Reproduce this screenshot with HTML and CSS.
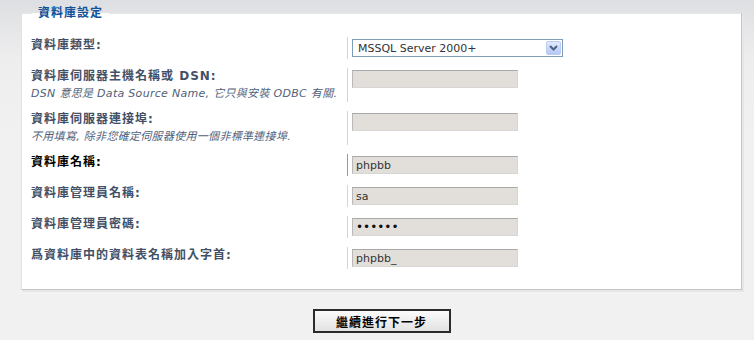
FILE: index.html
```html
<!DOCTYPE html>
<html lang="zh-Hant">
<head>
    <meta charset="UTF-8">
    <meta name="viewport" content="width=device-width, initial-scale=1.0">
    <title>資料庫設定</title>
    <link rel="stylesheet" href="styles.css">
</head>
<body>
    <form class="install-form" action="#" onsubmit="return false;">
        <fieldset class="settings">
            <legend>資料庫設定</legend>

            <dl class="row">
                <dt><label for="dbms">資料庫類型:</label></dt>
                <dd>
                    <div class="select" id="dbms">
                        <span class="select-value">MSSQL Server 2000+</span>
                        <span class="select-arrow">
                            <svg width="9" height="6" viewBox="0 0 9 6"><path d="M1 1 L4.5 4.5 L8 1" fill="none" stroke="#4d6185" stroke-width="2"/></svg>
                        </span>
                    </div>
                </dd>
            </dl>

            <dl class="row">
                <dt>
                    <label for="dbhost">資料庫伺服器主機名稱或 DSN:</label>
                    <span class="explain">DSN 意思是 Data Source Name, 它只與安裝 ODBC 有關.</span>
                </dt>
                <dd><input class="text" type="text" id="dbhost" value=""></dd>
            </dl>

            <dl class="row">
                <dt>
                    <label for="dbport">資料庫伺服器連接埠:</label>
                    <span class="explain">不用填寫, 除非您確定伺服器使用一個非標準連接埠.</span>
                </dt>
                <dd><input class="text" type="text" id="dbport" value=""></dd>
            </dl>

            <dl class="row active">
                <dt><label for="dbname">資料庫名稱:</label></dt>
                <dd><input class="text" type="text" id="dbname" value="phpbb"></dd>
            </dl>

            <dl class="row">
                <dt><label for="dbuser">資料庫管理員名稱:</label></dt>
                <dd><input class="text" type="text" id="dbuser" value="sa"></dd>
            </dl>

            <dl class="row">
                <dt><label for="dbpasswd">資料庫管理員密碼:</label></dt>
                <dd><input class="text" type="password" id="dbpasswd" value="secret"></dd>
            </dl>

            <dl class="row">
                <dt><label for="table_prefix">爲資料庫中的資料表名稱加入字首:</label></dt>
                <dd><input class="text" type="text" id="table_prefix" value="phpbb_"></dd>
            </dl>
        </fieldset>

        <div class="submit-row">
            <button class="btn" type="submit">繼續進行下一步</button>
        </div>
    </form>
</body>
</html>
```

FILE: styles.css
```css
html {
    height: 100%;
}

body {
    margin: 0;
    min-height: 100%;
    font-family: 'DejaVu Sans', 'Noto Sans CJK TC', sans-serif;
    background: linear-gradient(#dedfe2 0, #eeeeef 60px, #f1f1f1 140px);
    background-color: #f1f1f1;
}

.install-form {
    padding: 0 12px 0 21px;
}

.settings {
    margin: 5px 0 0 0;
    padding: 16px 9px 20px 9px;
    background-color: #fff;
    border: 1px solid;
    border-color: #e6e6e6 #c4c4c4 #c4c4c4 #e2e2e2;
    box-shadow: 2px 2px 0 #e6e6e6;
}

.settings legend {
    margin-left: 1px;
    padding: 0 6px;
    font-size: 12px;
    line-height: 16px;
    font-weight: bold;
    color: #115098;
    letter-spacing: 1px;
}

.row {
    display: flex;
    margin: 0 0 9px 0;
}

.row:last-child {
    margin-bottom: 0;
}

.row dt {
    width: 316px;
    margin: 0;
    flex-shrink: 0;
}

.row dd {
    margin: 0;
    padding: 2px 0 2px 4px;
    border-left: 1px solid #d4d4d4;
}

.row label {
    display: block;
    font-size: 12px;
    line-height: 17px;
    font-weight: bold;
    letter-spacing: 1px;
    color: #425067;
}

.row.active label {
    color: #000;
}

.row.active dd {
    border-left-color: #999;
}

.explain {
    display: block;
    font-size: 11px;
    line-height: 17px;
    font-style: italic;
    letter-spacing: 0.3px;
    color: #4f5f7b;
}

.text {
    box-sizing: border-box;
    display: block;
    width: 166px;
    height: 18px;
    margin: 0;
    padding: 0 3px;
    border: 1px solid;
    border-color: #a9a9a9 #d6d6d6 #d6d6d6 #b9b9b9;
    background-color: #e2dfda;
    font-family: 'DejaVu Sans', sans-serif;
    font-size: 11px;
    color: #333;
    outline: none;
}

input[type="password"].text {
    font-size: 12px;
    color: #111;
}

.select {
    box-sizing: border-box;
    display: flex;
    align-items: center;
    justify-content: space-between;
    width: 211px;
    height: 18px;
    padding: 0 1px 0 5px;
    border: 1px solid #7f9db9;
    background-color: #fff;
    font-size: 11px;
    color: #333;
}

.select-arrow {
    box-sizing: border-box;
    display: flex;
    align-items: center;
    justify-content: center;
    width: 15px;
    height: 14px;
    border: 1px solid #b8cdf6;
    border-radius: 2px;
    background: linear-gradient(#e1eafe, #b5c8f2);
}

.submit-row {
    display: flex;
    justify-content: center;
    margin-top: 19px;
}

.btn {
    box-sizing: border-box;
    width: 138px;
    height: 24px;
    padding: 0;
    border: 2px solid #2b2b2b;
    background: linear-gradient(#fbfbfb, #e2e2e2);
    font-family: 'DejaVu Sans', 'Noto Sans CJK TC', sans-serif;
    font-size: 12px;
    font-weight: bold;
    letter-spacing: 1px;
    color: #000;
    cursor: pointer;
}
```
